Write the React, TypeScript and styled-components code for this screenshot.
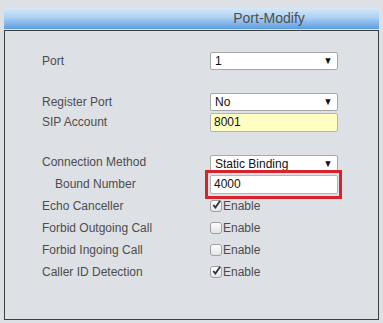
import React from "react";
import styled, { createGlobalStyle } from "styled-components";

const Global = createGlobalStyle`
  html, body { margin: 0; padding: 0; background: #dde0e4; }
  body { font-family: "Liberation Sans", Arial, sans-serif; }
`;

const Page = styled.div`
  width: 383px;
  height: 323px;
  box-sizing: border-box;
  padding: 8px 4px 0 4px;
  background: #dde0e4;
`;

const Header = styled.div`
  height: 21px;
  box-sizing: border-box;
  padding-left: 155px;
  text-align: center;
  font-size: 14px;
  line-height: 20px;
  color: #4f4f4f;
  background: linear-gradient(to bottom, #d6e8f9 0%, #aed0f2 45%, #5b9de2 100%);
  margin-bottom: 1px;
`;

const Panel = styled.div`
  height: 290px;
  box-sizing: border-box;
  border: 1px solid #3f3f3f;
  background: #dde0e4;
  padding: 19px 0 0 37px;
`;

const Row = styled.div<{ $h?: number }>`
  display: grid;
  grid-template-columns: 168px 1fr;
  align-items: center;
  height: ${(p) => p.$h ?? 22}px;
`;

const Spacer = styled.div<{ $h: number }>`
  height: ${(p) => p.$h}px;
`;

const Label = styled.div<{ $indent?: boolean }>`
  font-size: 12px;
  color: #4d4d4d;
  padding-left: ${(p) => (p.$indent ? 13 : 0)}px;
`;

const Select = styled.div<{ $top?: number }>`
  position: relative;
  width: 128px;
  height: 18px;
  box-sizing: border-box;
  border: 1px solid #a8a8a8;
  border-radius: 2px;
  background: #fff;
  font-size: 12px;
  line-height: 16px;
  color: #111;
  padding-left: 4px;
  margin-top: ${(p) => p.$top ?? 0}px;
  display: flex;
  align-items: center;
  justify-content: space-between;
  padding-right: 4px;
`;

const Arrow = styled.span`
  font-size: 10px;
  color: #111;
  transform: scaleX(0.9);
`;

const TextInput = styled.div<{ $yellow?: boolean }>`
  position: relative;
  width: 128px;
  height: 19px;
  box-sizing: border-box;
  border: 1px solid #b4b4b4;
  border-radius: 2px;
  background: ${(p) => (p.$yellow ? "#ffffc4" : "#fff")};
  font-size: 12px;
  line-height: 17px;
  color: #111;
  padding-left: 3px;
`;

const Highlight = styled.div`
  position: absolute;
  left: -6px;
  right: -5px;
  top: -6px;
  bottom: -6px;
  border: 3px solid #d8222c;
  pointer-events: none;
`;

const CheckWrap = styled.div`
  display: flex;
  align-items: center;
  font-size: 12px;
  color: #4d4d4d;
`;

const Box = styled.span`
  position: relative;
  width: 12px;
  height: 12px;
  box-sizing: border-box;
  border: 1px solid #a0a0a0;
  border-radius: 3px;
  background: linear-gradient(to bottom, #fdfdfd, #e4e4e4);
  margin-right: 1px;
  margin-top: -1px;
`;

const Tick = styled.svg`
  position: absolute;
  left: 0px;
  top: -2px;
`;

const Check = ({ on }: { on?: boolean }) => (
  <CheckWrap>
    <Box>
      {on && (
        <Tick width="11" height="11" viewBox="0 0 12 12">
          <path d="M2.5 6.5 L4.8 9.3 L10 2" fill="none" stroke="#333" strokeWidth="2" />
        </Tick>
      )}
    </Box>
    Enable
  </CheckWrap>
);

export default function App() {
  return (
    <Page>
      <Global />
      <Header>Port-Modify</Header>
      <Panel>
        <Row>
          <Label>Port</Label>
          <Select>
            <span>1</span>
            <Arrow>▼</Arrow>
          </Select>
        </Row>
        <Spacer $h={20} />
        <Row $h={20}>
          <Label>Register Port</Label>
          <Select>
            <span>No</span>
            <Arrow>▼</Arrow>
          </Select>
        </Row>
        <Row $h={20}>
          <Label>SIP Account</Label>
          <TextInput $yellow>8001</TextInput>
        </Row>
        <Spacer $h={19} />
        <Row>
          <Label>Connection Method</Label>
          <Select $top={4}>
            <span>Static Binding</span>
            <Arrow>▼</Arrow>
          </Select>
        </Row>
        <Row>
          <Label $indent>Bound Number</Label>
          <TextInput>
            4000
            <Highlight />
          </TextInput>
        </Row>
        <Row>
          <Label>Echo Canceller</Label>
          <Check on />
        </Row>
        <Row>
          <Label>Forbid Outgoing Call</Label>
          <Check />
        </Row>
        <Row>
          <Label>Forbid Ingoing Call</Label>
          <Check />
        </Row>
        <Row>
          <Label>Caller ID Detection</Label>
          <Check on />
        </Row>
      </Panel>
    </Page>
  );
}
